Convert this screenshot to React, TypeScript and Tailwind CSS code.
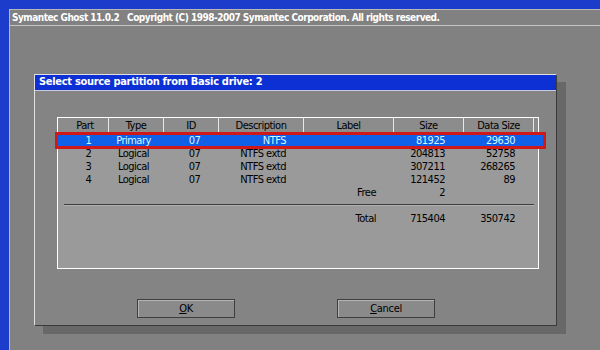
const font = "font-['DejaVu_Sans_Condensed','Liberation_Sans_Narrow','Liberation_Sans',sans-serif]"

const cols = ['w-[51px]', 'w-[55px]', 'w-[55px]', 'w-[85px]', 'w-[90px]', 'w-[70px]', 'w-[70px]']
const headers = ['Part', 'Type', 'ID', 'Description', 'Label', 'Size', 'Data Size']

const rows = [
  ['1', 'Primary', '07', 'NTFS', '', '81925', '29630'],
  ['2', 'Logical', '07', 'NTFS extd', '', '204813', '52758'],
  ['3', 'Logical', '07', 'NTFS extd', '', '307211', '268265'],
  ['4', 'Logical', '07', 'NTFS extd', '', '121452', '89'],
  ['', '', '', '', 'Free', '2', ''],
]

const align = [
  'text-center pl-[10px]',
  'text-center pr-[6px]',
  'text-center pl-[6px]',
  'text-right pr-[18px]',
  'text-right pr-[18px]',
  'text-right pr-[19px]',
  'text-right pr-[19px]',
]

function Row({ cells, selected }: { cells: string[]; selected?: boolean }) {
  return (
    <div className={`flex h-[13px] items-center leading-none ${selected ? 'text-[#d8f8ff]' : 'text-black'}`}>
      {cells.map((c, i) => (
        <div key={i} className={`${cols[i]} ${align[i]} shrink-0`}>
          {c}
        </div>
      ))}
    </div>
  )
}

export default function App() {
  return (
    <div className={`w-[600px] h-[350px] overflow-hidden bg-[#1c3ccc] pt-[9px] pl-[9px] ${font}`}>
      {/* main ghost window */}
      <div className="h-[341px] w-[591px] bg-[#818181] border-l border-t border-[#b8b8b8] flex flex-col">
        <div className="h-[16px] border-b border-[#c4c4c4] flex items-center pl-[2px] text-[10px] font-bold text-white tracking-[-0.5px] whitespace-nowrap">
          Symantec Ghost 11.0.2&nbsp;&nbsp;&nbsp;Copyright (C) 1998-2007 Symantec Corporation. All rights reserved.
        </div>

        <div className="pl-[24px] pt-[48px]">
          {/* dialog */}
          <div className="relative w-[523px] h-[252px] bg-[#848484] border-l border-t border-[#e0e0e0] border-r border-b border-r-[#3a3a3a] border-b-[#3a3a3a] shadow-[9px_8px_0_#686868] flex flex-col">
            <div className="h-[16px] bg-[#0c30d4] border-b border-[#c8c8e0] flex items-center pl-[4px] text-[11px] font-bold text-white tracking-[-0.3px] whitespace-nowrap">
              Select source partition from Basic drive: 2
            </div>

            {/* list panel */}
            <div className="ml-[22px] mt-[26px] w-[482px] h-[152px] bg-[#9a9a9a] border border-white flex flex-col text-[11px] tracking-[-0.5px]">
              <div className="flex h-[14px] bg-[#8c8c8c] items-center text-black leading-none">
                {headers.map((h, i) => (
                  <div key={h} className={`${cols[i]} shrink-0 h-full flex items-center justify-center border-r border-r-[#e8e8e8] ${i === 0 ? 'pl-[4px]' : ''}`}>
                    {h}
                  </div>
                ))}
              </div>

              <div className="mt-[2px] relative">
                <div className="absolute left-[-3px] top-[-2px] w-[491px] h-[17px] border-[3px] border-[#d01818] bg-[#1060e8]" />
                <div className="relative">
                  <Row cells={rows[0]} selected />
                </div>
              </div>
              {rows.slice(1).map((r, i) => (
                <Row key={i} cells={r} />
              ))}

              <div className="ml-[6px] mt-[5px] w-[470px] h-[2px] border-t border-[#3c3c3c] border-b border-b-[#b0b0b0]" />

              <div className="mt-[6px]">
                <Row cells={['', '', '', '', 'Total', '715404', '350742']} />
              </div>
            </div>

            {/* buttons */}
            <div className="flex gap-[102px] ml-[102px] mt-[30px] text-[11px] tracking-[-0.3px]">
              <button className="w-[98px] h-[19px] bg-[#8a8a8a] border border-[#3e3e3e] shadow-[inset_1px_1px_0_#b4b4b4] text-black leading-none">
                <span className="underline">O</span>K
              </button>
              <button className="w-[98px] h-[19px] bg-[#8a8a8a] border border-[#3e3e3e] shadow-[inset_1px_1px_0_#b4b4b4] text-black leading-none">
                <span className="underline">C</span>ancel
              </button>
            </div>
          </div>
        </div>
      </div>
    </div>
  )
}
